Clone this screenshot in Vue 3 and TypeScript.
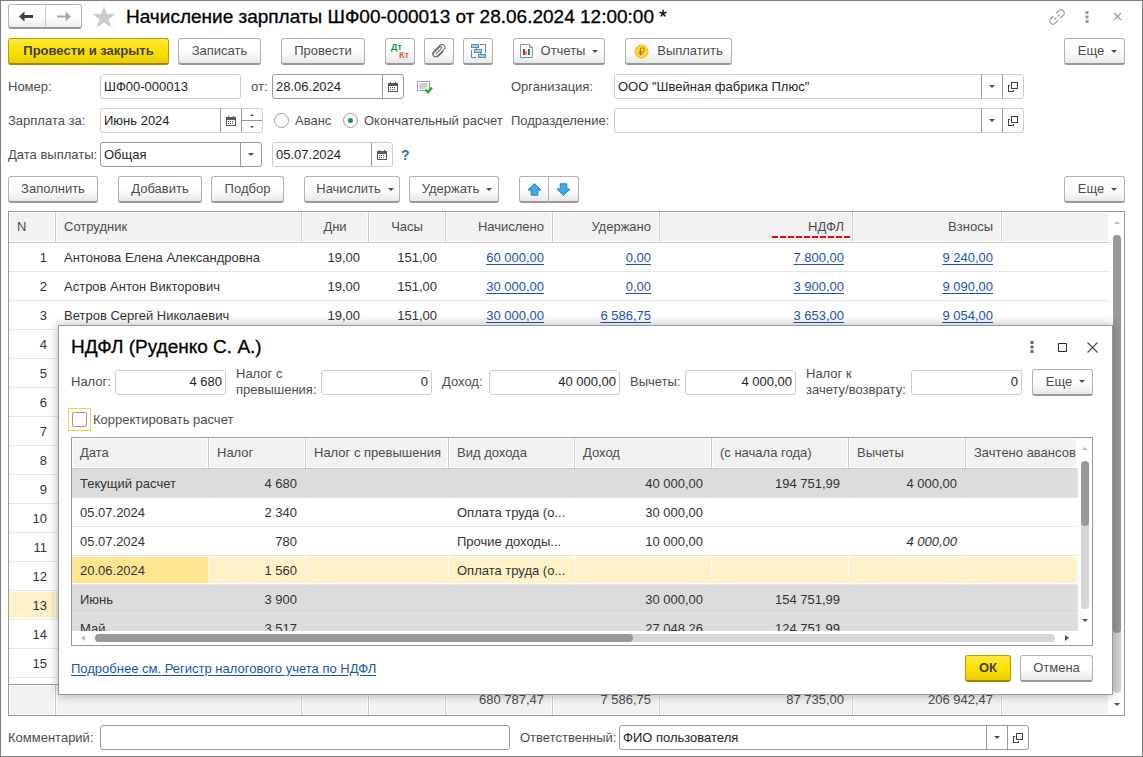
<script setup lang="ts">
import { ref } from 'vue'

interface Employee {
  n: number
  name: string
  days: string
  hours: string
  accrued: string
  withheld: string
  tax: string
  fees: string
}

interface TaxRow {
  date: string
  tax: string
  kind: string
  income: string
  total: string
  deduction: string
  mode: '' | 'group' | 'selected'
  italic?: boolean
}

const empty = { name: '', days: '', hours: '', accrued: '', withheld: '', tax: '', fees: '' }

const employees: Employee[] = [
  { n: 1, name: 'Антонова Елена Александровна', days: '19,00', hours: '151,00', accrued: '60 000,00', withheld: '0,00', tax: '7 800,00', fees: '9 240,00' },
  { n: 2, name: 'Астров Антон Викторович', days: '19,00', hours: '151,00', accrued: '30 000,00', withheld: '0,00', tax: '3 900,00', fees: '9 090,00' },
  { n: 3, name: 'Ветров Сергей Николаевич', days: '19,00', hours: '151,00', accrued: '30 000,00', withheld: '6 586,75', tax: '3 653,00', fees: '9 054,00' },
  ...Array.from({ length: 12 }, (_, i) => ({ n: i + 4, ...empty })),
]

const taxRows: TaxRow[] = [
  { date: 'Текущий расчет', tax: '4 680', kind: '', income: '40 000,00', total: '194 751,99', deduction: '4 000,00', mode: 'group' },
  { date: '05.07.2024', tax: '2 340', kind: 'Оплата труда (о...', income: '30 000,00', total: '', deduction: '', mode: '' },
  { date: '05.07.2024', tax: '780', kind: 'Прочие доходы...', income: '10 000,00', total: '', deduction: '4 000,00', mode: '', italic: true },
  { date: '20.06.2024', tax: '1 560', kind: 'Оплата труда (о...', income: '', total: '', deduction: '', mode: 'selected' },
  { date: 'Июнь', tax: '3 900', kind: '', income: '30 000,00', total: '154 751,99', deduction: '', mode: 'group' },
  { date: 'Май', tax: '3 517', kind: '', income: '27 048,26', total: '124 751,99', deduction: '', mode: 'group' },
]

const currentRow = 13
const payKind = ref('final')
const adjust = ref(false)

const calFrame = 'M0 1h10v9H0zM1 4v5h8V4z'
const calDots = 'M2 0h1v1H2zM7 0h1v1H7zM2 5h1v1H2zM4 5h1v1H4zM6 5h1v1H6zM2 7h1v1H2zM4 7h1v1H4zM6 7h1v1H6z'
const openShape = 'M3.500.5h6v6h-6zM2 3.500H.5v6h5V8'
</script>

<template>
  <main class="window">
    <header class="titlebar">
      <div class="nav">
        <button type="button" aria-label="Назад">
          <svg width="15" height="11" viewBox="0 0 15 11"><path d="M0 5.500 5.500.5V4H14v3H5.500v3.500z" fill="#404040" /></svg>
        </button>
        <button type="button" aria-label="Вперед">
          <svg width="15" height="11" viewBox="0 0 15 11"><path d="M15 5.500 9.500.5V4.500H1v2H9.500v4z" fill="#a6a6a6" /></svg>
        </button>
      </div>
      <svg class="star" width="24" height="22" viewBox="0 0 24 22"><path d="M12 0 14.900 8H23.500L16.600 13.100 19.200 21.500 12 16.400 4.800 21.500 7.400 13.100.5 8H9.100Z" fill="#ccc" /></svg>
      <h1>Начисление зарплаты ШФ00-000013 от 28.06.2024 12:00:00 *</h1>
      <div class="wintools">
        <button type="button" aria-label="Ссылка">
          <svg width="16" height="16" viewBox="0 0 16 16" fill="none" stroke="#999" stroke-width="1.200"><path d="M7 4.500 9.700 1.800a3.100 3.100 0 0 1 4.500 4.500L11.500 9M9 11.500 6.300 14.200a3.100 3.100 0 0 1-4.500-4.500L4.500 7M5.500 10.500l1.800-1.800M8.700 7.300l1.800-1.800" /></svg>
        </button>
        <button type="button" aria-label="Меню">
          <svg width="4" height="12" viewBox="0 0 4 12" fill="#999"><path d="M.5 0h3v3h-3zM.5 4.500h3v3h-3zM.5 9h3v3h-3z" /></svg>
        </button>
        <button type="button" aria-label="Закрыть">
          <svg width="9" height="9" viewBox="0 0 9 9"><path d="M1 1 8 8M8 1 1 8" stroke="#999" stroke-width="1.200" /></svg>
        </button>
      </div>
    </header>

    <div class="toolbar">
      <button type="button" class="btn primary w161">Провести и закрыть</button>
      <button type="button" class="btn w83 after">Записать</button>
      <button type="button" class="btn w84 after">Провести</button>
      <button type="button" class="btn w30" aria-label="Дт Кт"><span class="dtkt"><b class="dt">Дт</b><b class="kt">Кт</b></span></button>
      <button type="button" class="btn w30" aria-label="Файлы">
        <svg width="14" height="14" viewBox="0 0 14 14" fill="none" stroke="#737373" stroke-width="1.100"><path d="M3.800 10.200 9.300 4.700a1.200 1.200 0 0 0-1.700-1.700L2 8.600a2.400 2.400 0 0 0 3.400 3.400l6.600-6.600a2.900 2.900 0 0 0-4.100-4.100L1.800 7.300a3.300 3.300 0 0 0 4.700 4.800L11.500 7" /></svg>
      </button>
      <button type="button" class="btn w30 after" aria-label="Структура">
        <svg width="15" height="16" viewBox="0 0 15 16" fill="#a9cbe6" stroke="#5c8db5" shape-rendering="crispEdges"><path d="M.5 1.500h7v3h-7zM3.500 6.500h7v3h-7zM7.500 11.500h7v3h-7z" /><path d="M9 1.500h5.500v8.500M5.500 5v1M.5 7v7.500H5M9.500 10v1" fill="none" /></svg>
      </button>
      <button type="button" class="btn w92 after">
        <svg width="13" height="14" viewBox="0 0 13 14"><path d="M.5.5h9l3 3v10H.5z" fill="#fff" stroke="#7d95a8" /><path d="M9.500.5v3h3" fill="none" stroke="#7d95a8" /><path d="M3 5h2v6H3z" fill="#e02020" /><path d="M5 7h2v4H5z" fill="#e02020" opacity=".5" /><path d="M8 5h2v6H8z" fill="#0a9a40" /></svg>
        <span>Отчеты</span><i class="caret"></i>
      </button>
      <button type="button" class="btn w107">
        <svg width="15" height="15" viewBox="0 0 15 15"><circle cx="7.500" cy="7.500" r="6.500" fill="#ffd93c" stroke="#f0b020" /><path d="M6.500 11.500V4h2a1.900 1.900 0 0 1 0 4H4.800M4.800 9.800h4" fill="none" stroke="#a87c00" /></svg>
        <span>Выплатить</span>
      </button>
      <button type="button" class="btn w61 end"><span>Еще</span><i class="caret"></i></button>
    </div>

    <form class="form" @submit.prevent>
      <div class="left">
        <div class="line">
          <label class="cap" for="num">Номер:</label>
          <div class="field w141"><input id="num" type="text" value="ШФ00-000013" /></div>
          <label class="from" for="docdate">от:</label>
          <div class="field dark w132">
            <input id="docdate" type="text" value="28.06.2024" />
            <button type="button" class="cell" aria-label="Календарь"><svg class="cal" width="10" height="10" viewBox="0 0 10 10"><path :d="calFrame" fill="#595959" fill-rule="evenodd" /><path :d="calDots" fill="#595959" /></svg></button>
          </div>
          <svg class="posted" width="16" height="14" viewBox="0 0 16 14"><path d="M.5 1.500h12v9H.5z" fill="#fff" stroke="#8d9fae" /><path d="M2.500 4h8M2.500 6h8M2.500 8h6" stroke="#8d9fae" /><path d="M8.500 9.500l2.500 2.700L15 7.500" fill="none" stroke="#20b030" stroke-width="2.400" /></svg>
        </div>
        <div class="line">
          <label class="cap" for="month">Зарплата за:</label>
          <div class="field w163">
            <input id="month" type="text" value="Июнь 2024" />
            <button type="button" class="cell" aria-label="Календарь"><svg class="cal" width="10" height="10" viewBox="0 0 10 10"><path :d="calFrame" fill="#595959" fill-rule="evenodd" /><path :d="calDots" fill="#595959" /></svg></button>
            <div class="spin"><button type="button" aria-label="Больше"><i class="tiny up"></i></button><button type="button" aria-label="Меньше"><i class="tiny"></i></button></div>
          </div>
          <label class="radio first"><input v-model="payKind" type="radio" name="kind" value="advance" />Аванс</label>
          <label class="radio"><input v-model="payKind" type="radio" name="kind" value="final" />Окончательный расчет</label>
        </div>
        <div class="line">
          <label class="cap" for="paytype">Дата выплаты:</label>
          <div class="field dark w162">
            <select id="paytype"><option>Общая</option></select>
            <span class="cell"><i class="caret"></i></span>
          </div>
          <div class="field w121 paydate">
            <input type="text" value="05.07.2024" aria-label="Дата выплаты" />
            <button type="button" class="cell" aria-label="Календарь"><svg class="cal" width="10" height="10" viewBox="0 0 10 10"><path :d="calFrame" fill="#595959" fill-rule="evenodd" /><path :d="calDots" fill="#595959" /></svg></button>
          </div>
          <a href="#" class="help">?</a>
        </div>
      </div>
      <div class="right">
        <div class="line">
          <label class="cap" for="org">Организация:</label>
          <div class="field wide">
            <select id="org"><option>ООО "Швейная фабрика Плюс"</option></select>
            <span class="cell"><i class="caret"></i></span>
            <button type="button" class="cell" aria-label="Открыть"><svg class="cal" width="10" height="10" viewBox="0 0 10 10"><path :d="openShape" fill="none" stroke="#404040" /></svg></button>
          </div>
        </div>
        <div class="line">
          <label class="cap" for="dept">Подразделение:</label>
          <div class="field wide">
            <select id="dept"><option></option></select>
            <span class="cell"><i class="caret"></i></span>
            <button type="button" class="cell" aria-label="Открыть"><svg class="cal" width="10" height="10" viewBox="0 0 10 10"><path :d="openShape" fill="none" stroke="#404040" /></svg></button>
          </div>
        </div>
      </div>
    </form>

    <div class="toolbar">
      <button type="button" class="btn w90 after">Заполнить</button>
      <button type="button" class="btn w84">Добавить</button>
      <button type="button" class="btn w73 after">Подбор</button>
      <button type="button" class="btn w96 drop"><span>Начислить</span><i class="caret"></i></button>
      <button type="button" class="btn w90 after drop"><span>Удержать</span><i class="caret"></i></button>
      <div class="pair">
        <button type="button" class="btn w30" aria-label="Вверх"><svg width="15" height="13" viewBox="0 0 15 13"><path d="M7.500.7 14 7h-3.200v5.200H4.200V7H1z" fill="#3fa9ee" stroke="#2c7cb5" /></svg></button>
        <button type="button" class="btn w30" aria-label="Вниз"><svg width="15" height="13" viewBox="0 0 15 13"><path d="M7.500 12.300 14 6h-3.200V.8H4.200V6H1z" fill="#3fa9ee" stroke="#2c7cb5" /></svg></button>
      </div>
      <button type="button" class="btn w61 end"><span>Еще</span><i class="caret"></i></button>
    </div>

    <section class="grid staff">
      <div class="content">
        <table>
          <colgroup><col class="c47" /><col class="c246" /><col class="c67" /><col class="c77" /><col class="c107" /><col class="c107" /><col class="c193" /><col class="c149" /><col /></colgroup>
          <thead>
            <tr><th>N</th><th>Сотрудник</th><th class="mid">Дни</th><th class="mid">Часы</th><th class="num">Начислено</th><th class="num">Удержано</th><th class="num marked">НДФЛ</th><th class="num">Взносы</th><th></th></tr>
          </thead>
          <tbody>
            <tr v-for="e in employees" :key="e.n" :class="{ selected: e.n === currentRow }">
              <td class="num">{{ e.n }}</td>
              <td>{{ e.name }}</td>
              <td class="num">{{ e.days }}</td>
              <td class="num">{{ e.hours }}</td>
              <td class="num"><a v-if="e.accrued" href="#">{{ e.accrued }}</a></td>
              <td class="num"><a v-if="e.withheld" href="#">{{ e.withheld }}</a></td>
              <td class="num"><a v-if="e.tax" href="#">{{ e.tax }}</a></td>
              <td class="num"><a v-if="e.fees" href="#">{{ e.fees }}</a></td>
              <td></td>
            </tr>
          </tbody>
        </table>
        <table class="totals">
          <colgroup><col class="c47" /><col class="c246" /><col class="c67" /><col class="c77" /><col class="c107" /><col class="c107" /><col class="c193" /><col class="c149" /><col /></colgroup>
          <tfoot>
            <tr><td></td><td></td><td></td><td></td><td class="num">680 787,47</td><td class="num">7 586,75</td><td class="num">87 735,00</td><td class="num">206 942,47</td><td></td></tr>
          </tfoot>
        </table>
      </div>
      <div class="vscroll"><i class="caret up off"></i><div class="track"><div class="thumb main"></div></div><i class="caret"></i></div>
    </section>

    <footer class="bottom">
      <label class="cap" for="comment">Комментарий:</label>
      <div class="field dark comment"><input id="comment" type="text" /></div>
      <label class="resp" for="resp">Ответственный:</label>
      <div class="field dark wide">
        <select id="resp"><option>ФИО пользователя</option></select>
        <span class="cell"><i class="caret"></i></span>
        <button type="button" class="cell" aria-label="Открыть"><svg class="cal" width="10" height="10" viewBox="0 0 10 10"><path :d="openShape" fill="none" stroke="#404040" /></svg></button>
      </div>
    </footer>

    <section class="dialog" role="dialog" aria-labelledby="dlgtitle">
      <header class="dlghead">
        <h2 id="dlgtitle">НДФЛ (Руденко С. А.)</h2>
        <div class="wintools">
          <button type="button" aria-label="Меню"><svg width="4" height="12" viewBox="0 0 4 12" fill="#666"><path d="M.5 0h3v3h-3zM.5 4.500h3v3h-3zM.5 9h3v3h-3z" /></svg></button>
          <button type="button" aria-label="Развернуть"><svg width="9" height="9" viewBox="0 0 9 9"><path d="M.5.5h8v8h-8z" fill="none" stroke="#262626" /></svg></button>
          <button type="button" aria-label="Закрыть"><svg width="11" height="11" viewBox="0 0 11 11"><path d="M.5.5l10 10M10.500.5l-10 10" stroke="#4d4d4d" stroke-width="1.200" /></svg></button>
        </div>
      </header>
      <div class="sums">
        <label for="s1" class="l44">Налог:</label>
        <div class="field"><input id="s1" type="text" value="4 680" /></div>
        <label for="s2" class="l85 next">Налог с<br />превышения:</label>
        <div class="field"><input id="s2" type="text" value="0" /></div>
        <label for="s3" class="l47 next">Доход:</label>
        <div class="field big"><input id="s3" type="text" value="40 000,00" /></div>
        <label for="s4" class="l55 next">Вычеты:</label>
        <div class="field"><input id="s4" type="text" value="4 000,00" /></div>
        <label for="s5" class="l105 next">Налог к<br />зачету/возврату:</label>
        <div class="field"><input id="s5" type="text" value="0" /></div>
        <button type="button" class="btn w61 next"><span>Еще</span><i class="caret"></i></button>
      </div>
      <label class="check"><span class="focus"><input v-model="adjust" type="checkbox" /></span>Корректировать расчет</label>
      <div class="grid taxes">
        <div class="upper">
          <div class="content clip">
            <table>
              <colgroup><col class="c137" /><col class="c97" /><col class="c143" /><col class="c126" /><col class="c137" /><col class="c137" /><col class="c117" /><col /></colgroup>
              <thead>
                <tr><th>Дата</th><th>Налог</th><th>Налог с превышения</th><th>Вид дохода</th><th>Доход</th><th>(с начала года)</th><th>Вычеты</th><th class="tight">Зачтено авансов</th></tr>
              </thead>
              <tbody>
                <tr v-for="(r, i) in taxRows" :key="i" :class="r.mode">
                  <td :class="{ current: r.mode === 'selected' }">{{ r.date }}</td>
                  <td class="num">{{ r.tax }}</td>
                  <td></td>
                  <td>{{ r.kind }}</td>
                  <td class="num">{{ r.income }}</td>
                  <td class="num">{{ r.total }}</td>
                  <td class="num" :class="{ italic: r.italic }">{{ r.deduction }}</td>
                  <td></td>
                </tr>
              </tbody>
            </table>
          </div>
          <div class="vscroll"><i class="caret up off"></i><div class="track"><div class="thumb small"></div></div><i class="caret"></i></div>
        </div>
        <div class="hscroll"><i class="side back"></i><div class="track"><div class="thumb"></div></div><i class="side"></i></div>
      </div>
      <footer class="dlgfoot">
        <a href="#">Подробнее см. Регистр налогового учета по НДФЛ</a>
        <button type="button" class="btn primary w46">ОК</button>
        <button type="button" class="btn w73">Отмена</button>
      </footer>
    </section>
  </main>
</template>

<style>
body {
  margin: 0;
  background: #fff;
}
</style>

<style scoped>
* {
  box-sizing: border-box;
}
.window {
  position: relative;
  display: flex;
  flex-direction: column;
  min-height: 100vh;
  padding: 3px 17px 6px 7px;
  border: 1px solid #808080;
  background: #fff;
  color: #4d4d4d;
  font-family: "Liberation Sans", Arial, sans-serif;
  font-size: 13px;
  line-height: 16px;
}
button,
input,
select {
  margin: 0;
  font: inherit;
  color: inherit;
}
button {
  padding: 0;
  border: 0;
  background: none;
}
svg {
  display: block;
  flex: none;
}
a {
  color: #1a55b0;
  text-decoration: underline;
  text-underline-offset: 2px;
}
h1,
h2 {
  margin: 0;
  color: #000;
  font-size: 19px;
  font-weight: 400;
  line-height: 24px;
  white-space: nowrap;
  -webkit-text-stroke: 0.3px #000;
}
.titlebar {
  display: flex;
  align-items: center;
  height: 25px;
}
.nav {
  display: flex;
  width: 74px;
  height: 25px;
  border: 1px solid #b3b3b3;
  border-bottom: 2px solid #999;
  border-radius: 3px;
  background: linear-gradient(#fff 55%, #ededed);
}
.nav button {
  display: flex;
  flex: 1;
  align-items: center;
  justify-content: center;
}
.nav button + button {
  border-left: 1px solid #ccc;
}
.star {
  margin: 0 10px;
}
.wintools {
  display: flex;
  margin-left: auto;
}
.wintools button {
  display: flex;
  align-items: center;
  justify-content: center;
  width: 30px;
  height: 24px;
}
.titlebar .wintools {
  margin-right: -7px;
}
.toolbar {
  display: flex;
  align-items: center;
  gap: 9px;
  margin-top: 9px;
}
.btn {
  display: inline-flex;
  flex: none;
  align-items: center;
  justify-content: center;
  height: 27px;
  border: 1px solid #b3b3b3;
  border-bottom: 2px solid #999;
  border-radius: 3px;
  background: linear-gradient(#fff 50%, #e8e8e8);
  color: #4d4d4d;
  white-space: nowrap;
}
.btn.primary {
  border-color: #b5a000;
  border-bottom-color: #998700;
  background: linear-gradient(#ffe83c, #ffe000 50%, #ebcf00);
  color: #404040;
  font-weight: 700;
}
.btn svg + span {
  margin-left: 8px;
}
.btn .caret {
  margin-left: 7px;
}
.btn.w61,
.btn.drop {
  padding-left: 6px;
}
.after {
  margin-right: 11px;
}
.end {
  margin-left: auto;
}
.w30 { width: 30px; }
.w46 { width: 46px; }
.w61 { width: 61px; }
.w73 { width: 73px; }
.w83 { width: 83px; }
.w84 { width: 84px; }
.w90 { width: 90px; }
.w92 { width: 92px; }
.w96 { width: 96px; }
.w107 { width: 107px; }
.w161 { width: 161px; }
.w121 { width: 121px; }
.w132 { width: 132px; }
.w141 { width: 141px; }
.w162 { width: 162px; }
.w163 { width: 163px; }
.pair {
  display: flex;
}
.pair .btn:first-child {
  border-radius: 3px 0 0 3px;
}
.pair .btn + .btn {
  border-left: 0;
  border-radius: 0 3px 3px 0;
}
.dtkt {
  display: flex;
  flex-direction: column;
  width: 18px;
  font-size: 9px;
  line-height: 8px;
}
.dt {
  align-self: flex-start;
  color: #0a9a50;
}
.kt {
  align-self: flex-end;
  color: #e8504c;
}
.caret {
  flex: none;
  width: 0;
  height: 0;
  border: 3px solid transparent;
  border-top-color: #4d4d4d;
  border-bottom-width: 0;
}
.caret.up {
  border-top-width: 0;
  border-bottom: 3px solid #4d4d4d;
}
.caret.off {
  border-bottom-color: #bfbfbf;
}
.tiny {
  width: 0;
  height: 0;
  border: 2px solid transparent;
  border-top-color: #4d4d4d;
  border-bottom-width: 0;
}
.tiny.up {
  border-top-width: 0;
  border-bottom: 2px solid #4d4d4d;
}
.form {
  display: flex;
  margin: 9px 0 0;
}
.left {
  flex: none;
  width: 503px;
}
.right {
  flex: 1;
}
.line {
  display: flex;
  align-items: center;
  height: 25px;
  white-space: nowrap;
}
.line + .line {
  margin-top: 9px;
}
.cap {
  flex: none;
  width: 92px;
}
.right .cap {
  width: 103px;
}
.field {
  display: flex;
  flex: none;
  height: 25px;
  border: 1px solid #ccc;
  border-radius: 3px;
  background: #fff;
  color: #262626;
}
.field.dark {
  border-color: #999;
}
.field input,
.field select {
  flex: 1;
  width: 0;
  min-width: 0;
  padding: 0 3px;
  border: 0;
  outline: 0;
  background: none;
  appearance: none;
}
.cell {
  display: flex;
  flex: none;
  align-items: center;
  justify-content: center;
  width: 21px;
  border-left: 1px solid #999;
}
.cal {
  shape-rendering: crispEdges;
}
.spin {
  display: flex;
  flex-direction: column;
  width: 21px;
  border-left: 1px solid #999;
}
.spin button {
  display: flex;
  flex: 1;
  align-items: center;
  justify-content: center;
}
.spin button + button {
  border-top: 1px solid #999;
}
.from {
  width: 31px;
  padding-left: 10px;
}
.posted {
  margin-left: 13px;
}
.wide {
  flex: 0 1 410px;
}
.radio {
  display: flex;
  align-items: center;
  gap: 6px;
  margin-left: 11px;
}
.radio.first {
  width: 58px;
}
.radio input {
  display: grid;
  place-items: center;
  width: 15px;
  height: 15px;
  border: 1px solid #999;
  border-radius: 50%;
  appearance: none;
}
.radio input:checked::before {
  width: 5px;
  height: 5px;
  border-radius: 50%;
  background: #0a9a40;
  content: "";
}
.paydate {
  margin-left: 10px;
}
.help {
  margin-left: 8px;
  color: #1a7ac0;
  font-size: 14px;
  font-weight: 700;
  text-decoration: none;
}
.grid {
  display: flex;
  border: 1px solid #999;
}
.staff {
  flex: 1;
  margin-top: 8px;
}
.content {
  display: flex;
  flex: 1;
  flex-direction: column;
  min-width: 0;
}
table {
  width: 100%;
  border-spacing: 0;
  table-layout: fixed;
  color: #333;
}
th,
td {
  overflow: hidden;
  height: 29px;
  padding: 2px 8px 0;
  border-right: 1px solid transparent;
  border-bottom: 1px solid #e6e6e6;
  font-weight: 400;
  text-align: left;
  white-space: nowrap;
}
th,
.totals td {
  position: relative;
  height: 31px;
  padding-top: 0;
  border-right: 1px solid #ccc;
  border-bottom: 1px solid #ccc;
  background: #f2f2f2;
  box-shadow: inset 0 0 0 1px #fff;
  color: #4d4d4d;
}
th:last-child,
.totals td:last-child {
  border-right-color: #fff;
}
th.tight {
  padding-right: 0;
}
.totals {
  margin-top: auto;
}
.totals td {
  border-top: 1px solid #999;
  border-bottom: 0;
}
td.num,
th.num {
  text-align: right;
}
.mid {
  text-align: center;
}
.marked::after {
  position: absolute;
  right: 2px;
  bottom: 4px;
  width: 78px;
  height: 2px;
  background: repeating-linear-gradient(90deg, #f00 0 6px, transparent 6px 8px);
  content: "";
}
.group td {
  background: #dcdcdc;
}
.selected td {
  border-right-color: #fff;
  background: #fff2c8;
  background-clip: padding-box;
  box-shadow: inset 0 1px #fff, inset 0 -1px #fff;
}
.selected .current {
  background-color: #ffe590;
}
.italic {
  font-style: italic;
}
.c47 { width: 47px; }
.c67 { width: 67px; }
.c77 { width: 77px; }
.c97 { width: 97px; }
.c107 { width: 107px; }
.c117 { width: 117px; }
.c126 { width: 126px; }
.c137 { width: 137px; }
.c143 { width: 143px; }
.c149 { width: 149px; }
.c193 { width: 193px; }
.c246 { width: 246px; }
.vscroll {
  display: flex;
  flex: none;
  flex-direction: column;
  align-items: center;
  width: 14px;
  padding: 9px 0;
}
.vscroll .track {
  flex: 1;
  width: 8px;
  margin: 11px 0 10px;
}
.track {
  border-radius: 4px;
  background: #d6d6d6;
}
.thumb {
  border-radius: 4px;
  background: #999;
}
.thumb.main {
  height: 87%;
}
.thumb.small {
  height: 44%;
}
.bottom {
  display: flex;
  align-items: center;
  margin-top: 9px;
}
.comment {
  flex: 0 1 410px;
}
.resp {
  flex: none;
  width: 109px;
  padding-left: 10px;
}
.dialog {
  position: absolute;
  top: 324px;
  right: 29px;
  left: 57px;
  padding: 9px 19px 12px 12px;
  border: 1px solid #999;
  background: #fff;
  box-shadow: 0 0 10px rgba(0, 0, 0, 0.3);
}
.dlghead {
  display: flex;
  align-items: center;
  height: 24px;
  margin-right: -14px;
}
.sums {
  display: flex;
  align-items: center;
  height: 34px;
  margin-top: 6px;
  white-space: nowrap;
}
.sums .field {
  flex: 1 1 111px;
}
.sums .field.big {
  flex: 1 1 131px;
}
.sums input {
  text-align: right;
}
.sums label {
  flex: none;
}
.l44 { width: 44px; }
.l47 { width: 47px; }
.l55 { width: 55px; }
.l85 { width: 85px; }
.l105 { width: 105px; }
.sums .next {
  margin-left: 10px;
}
.check {
  display: flex;
  align-items: center;
  gap: 2px;
  width: max-content;
  margin: 9px 0 0 -3px;
}
.focus {
  display: flex;
  padding: 3px;
  border: 1px solid #ffcc33;
}
.check input {
  width: 15px;
  height: 15px;
  border: 1px solid #999;
  border-radius: 2px;
  appearance: none;
}
.check input:checked {
  background: #0a9a40;
}
.taxes {
  flex-direction: column;
  margin-top: 6px;
}
.upper {
  display: flex;
  height: 193px;
}
.clip {
  overflow: hidden;
}
.hscroll {
  display: flex;
  align-items: center;
  height: 14px;
  padding: 0 23px 0 9px;
}
.hscroll .track {
  flex: 1;
  height: 8px;
  margin: 0 10px;
}
.hscroll .thumb {
  width: 56%;
  height: 8px;
}
.side {
  width: 0;
  height: 0;
  border: 3px solid transparent;
  border-right-width: 0;
  border-left: 4px solid #4d4d4d;
}
.side.back {
  border-right: 4px solid #bfbfbf;
  border-left-width: 0;
}
.dlgfoot {
  display: flex;
  align-items: center;
  gap: 9px;
  margin-top: 9px;
}
.dlgfoot a {
  margin-right: auto;
}
</style>
